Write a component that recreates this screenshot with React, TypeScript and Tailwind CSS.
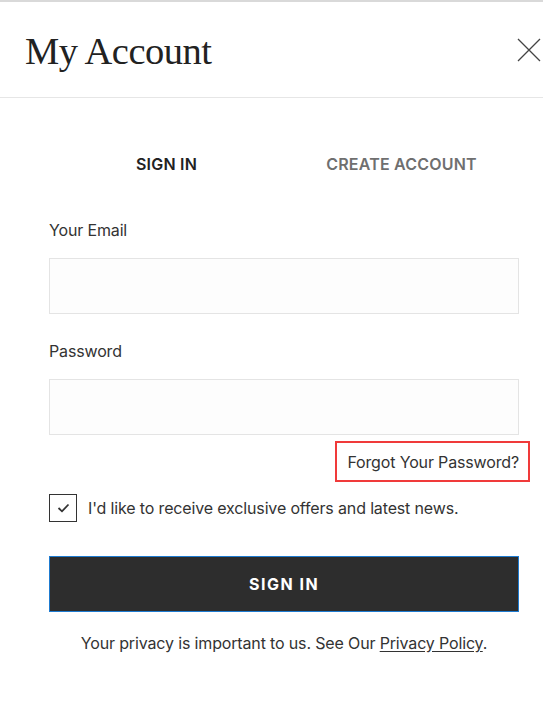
import { FC } from "react";

const sans = "font-['Inter','Liberation_Sans',sans-serif]";

const App: FC = () => {
	return (
		<div className={`min-h-[706px] w-full bg-white text-[#333] ${sans}`}>
			<div className="h-[2px] bg-[#d9d9d9]" />
			<header className="flex h-[96px] items-center justify-between border-b border-[#e6e6e6] pl-[25px] pr-[1px]">
				<h1 className="mt-[4px] font-['Liberation_Serif',serif] text-[38.5px] font-normal leading-none tracking-[-0.5px] text-[#222]">
					My Account
				</h1>
				<button className="flex h-[26px] w-[26px] items-center justify-center text-[#444]">
					<svg width="24" height="24" viewBox="0 0 24 24" fill="none" stroke="currentColor" strokeWidth="1.3">
						<path d="M1 1 L23 23 M23 1 L1 23" />
					</svg>
				</button>
			</header>
			<main className="pb-10 pl-[49px] pr-[24px] pt-[56px]">
				<nav className="flex text-[16px] font-semibold leading-5 tracking-[0.2px]">
					<button className="flex-1 text-center text-[#222]">SIGN IN</button>
					<button className="flex-1 text-center text-[#6f6f6f]">CREATE ACCOUNT</button>
				</nav>
				<form className="mt-[46px] flex flex-col text-[16px] leading-5 tracking-[-0.15px]">
					<label>Your Email</label>
					<input className="mt-[18px] h-[56px] border border-[#e4e4e4] bg-[#fdfdfd] px-3 outline-none" />
					<label className="mt-[27px]">Password</label>
					<input type="password" className="mt-[18px] h-[56px] border border-[#e4e4e4] bg-[#fdfdfd] px-3 outline-none" />
					<div className="-mr-[11px] mt-[6px] flex justify-end">
						<a className="flex h-[41px] w-[195px] items-center justify-end border-2 border-[#f03a3a] pr-[9px] text-[#333]">
							Forgot Your Password?
						</a>
					</div>
					<div className="mt-[12px] flex items-center gap-[11px]">
						<span className="flex h-[28px] w-[28px] items-center justify-center border-[1.5px] border-[#333]">
							<svg width="13" height="10" viewBox="0 0 13 10" fill="none" stroke="#333" strokeWidth="1.8">
								<path d="M1.5 5 L5 8.3 L11.5 1.5" />
							</svg>
						</span>
						<span>I'd like to receive exclusive offers and latest news.</span>
					</div>
					<button type="button" className="mt-[34px] h-[56px] border border-[#1e7bd0] bg-[#2d2d2d] font-bold tracking-[1.5px] text-white">
						SIGN IN
					</button>
					<p className="mt-[21px] text-center">
						Your privacy is important to us. See Our <a className="underline underline-offset-2">Privacy Policy</a>.
					</p>
				</form>
			</main>
		</div>
	);
};

export default App;
